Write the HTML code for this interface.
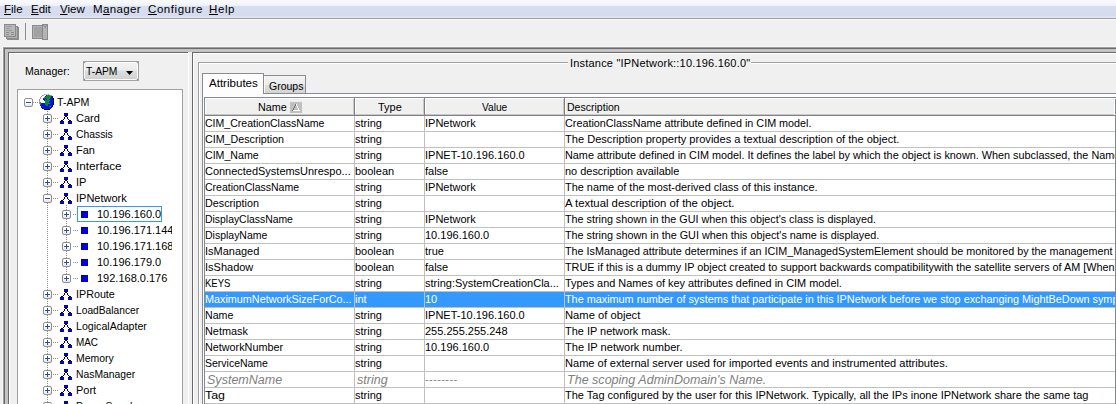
<!DOCTYPE html><html><head><meta charset="utf-8"><style>
*{margin:0;padding:0;box-sizing:border-box}
html,body{width:1116px;height:404px;overflow:hidden;background:#f0f0f0;font-family:"Liberation Sans", sans-serif;font-size:11px;color:#000;position:relative}
.a{position:absolute}
.t{position:absolute;white-space:pre;line-height:16px}
.u{text-decoration:underline}
</style></head><body>
<div class="a" style="left:0px;top:0px;width:1116px;height:18px;background:linear-gradient(#f8f9fc 0,#f6f7fb 3px,#eef1f8 5px,#eef1f8 6px,#d8deef 6px,#d6dcee 16px,#e2e6f4 17px,#e2e6f4 18px);"></div><div class="a" style="left:0px;top:18px;width:1116px;height:1px;background:#a0a0a0;"></div><div class="a" style="left:0px;top:19px;width:1116px;height:1px;background:#fafafa;"></div><div class="t" style="left:4px;top:1px;font-size:11.5px;letter-spacing:0px"><span class="u">F</span>ile</div><div class="t" style="left:31px;top:1px;font-size:11.5px;letter-spacing:0px"><span class="u">E</span>dit</div><div class="t" style="left:60px;top:1px;font-size:11.5px;letter-spacing:0px"><span class="u">V</span>iew</div><div class="t" style="left:93px;top:1px;font-size:11.5px;letter-spacing:0.38px">M<span class="u">a</span>nager</div><div class="t" style="left:148px;top:1px;font-size:11.5px;letter-spacing:0.56px"><span class="u">C</span>onfigure</div><div class="t" style="left:209px;top:1px;font-size:11.5px;letter-spacing:0.6px"><span class="u">H</span>elp</div><svg class="a" style="left:0;top:20px" width="60" height="27" viewBox="0 20 60 27" shape-rendering="crispEdges">
<rect x="7" y="27" width="12" height="13" fill="#8c8c8c"/>
<rect x="8" y="28" width="10" height="11" fill="#a6a6a6"/>
<rect x="6" y="26" width="12" height="13" fill="#8c8c8c"/>
<rect x="7" y="27" width="10" height="11" fill="#b2b2b2"/>
<rect x="4" y="24" width="12" height="13" fill="#8a8a8a"/>
<rect x="5" y="25" width="10" height="11" fill="#b8b8b8"/>
<rect x="6" y="26" width="6" height="1" fill="#9c9c9c"/>
<rect x="6" y="28" width="4" height="1" fill="#9c9c9c"/>
<rect x="6" y="30" width="6" height="1" fill="#9c9c9c"/>
<rect x="6" y="32" width="3" height="1" fill="#8c8c8c"/>
<rect x="11" y="32" width="3" height="1" fill="#8c8c8c"/>
<rect x="6" y="34" width="3" height="1" fill="#8c8c8c"/>
<rect x="11" y="34" width="3" height="1" fill="#8c8c8c"/>
<rect x="25" y="23" width="1" height="17" fill="#8e8e8e"/>
<rect x="32" y="25" width="12" height="14" fill="#8a8a8a"/>
<rect x="33" y="26" width="10" height="12" fill="#b0b0b0"/>
<rect x="34" y="27" width="8" height="10" fill="#a2a2a2"/>
<rect x="42" y="24" width="6" height="16" fill="#8a8a8a"/>
<rect x="43" y="25" width="4" height="14" fill="#b4b4b4"/>
<path d="M43 25h1v1h-1zM44 26h1v1h-1zM45 27h1v1h-1zM46 25h1v1h-1zM45 26h1v1h-1z" fill="#8a8a8a"/>
</svg><div class="a" style="left:2px;top:46px;width:1114px;height:1px;background:#f7f7f7;"></div><div class="a" style="left:2px;top:46px;width:1px;height:358px;background:#f7f7f7;"></div><div class="a" style="left:3px;top:47px;width:1113px;height:1px;background:#a0a0a0;"></div><div class="a" style="left:3px;top:47px;width:1px;height:357px;background:#a0a0a0;"></div><div class="a" style="left:4px;top:48px;width:1112px;height:1px;background:#696969;"></div><div class="a" style="left:4px;top:48px;width:1px;height:356px;background:#696969;"></div><div class="a" style="left:5px;top:49px;width:1111px;height:3px;background:#c4c4c4;"></div><div class="a" style="left:5px;top:49px;width:3px;height:355px;background:#c4c4c4;"></div><div class="a" style="left:8px;top:52px;width:180px;height:1px;background:#696969;"></div><div class="a" style="left:8px;top:52px;width:1px;height:352px;background:#696969;"></div><div class="a" style="left:9px;top:53px;width:179px;height:1px;background:#ffffff;"></div><div class="a" style="left:9px;top:53px;width:1px;height:351px;background:#ffffff;"></div><div class="a" style="left:188px;top:52px;width:1px;height:352px;background:#ffffff;"></div><div class="a" style="left:189px;top:52px;width:3px;height:352px;background:#f0f0f0;"></div><div class="a" style="left:192px;top:52px;width:924px;height:1px;background:#696969;"></div><div class="a" style="left:192px;top:52px;width:1px;height:352px;background:#696969;"></div><div class="a" style="left:193px;top:53px;width:923px;height:1px;background:#ffffff;"></div><div class="a" style="left:193px;top:53px;width:1px;height:351px;background:#ffffff;"></div><div class="t" style="left:25px;top:63px;transform:scaleX(0.96);transform-origin:0 0">Manager:</div><div class="a" style="left:83px;top:61px;width:56px;height:20px;border:1px solid #a3a3a3;background:#7a7a7a"></div><div class="a" style="left:84px;top:61px;width:54px;height:20px;border-top:1px solid #a3a3a3;border-bottom:1px solid #a3a3a3;background:transparent"></div><div class="a" style="left:83px;top:62px;width:56px;height:18px;border-left:1px solid #a3a3a3;border-right:1px solid #a3a3a3"></div><div class="a" style="left:84px;top:62px;width:54px;height:18px;border:1px solid #fbfbfb;border-radius:2px;background:linear-gradient(#f2f2f2,#ebebeb 45%,#dddddd 50%,#d2d2d2)"></div><div class="t" style="left:86px;top:63px;transform:scaleX(0.935);transform-origin:0 0">T-APM</div><svg class="a" style="left:126px;top:71px" width="8" height="5"><path d="M0 0h7l-3.5 4z" fill="#000"/></svg><div class="a" style="left:17px;top:89px;width:166px;height:315px;border:1px solid #a0a0a0;border-bottom:none;background:#fff"></div><div class="a" style="left:18px;top:90px;width:164px;height:314px;overflow:hidden"><div class="a" style="left:29px;top:21px;width:1px;height:1px;background:#8c8c8c;"></div><div class="a" style="left:29px;top:23px;width:1px;height:1px;background:#8c8c8c;"></div><div class="a" style="left:29px;top:25px;width:1px;height:1px;background:#8c8c8c;"></div><div class="a" style="left:29px;top:27px;width:1px;height:1px;background:#8c8c8c;"></div><div class="a" style="left:29px;top:29px;width:1px;height:1px;background:#8c8c8c;"></div><div class="a" style="left:29px;top:31px;width:1px;height:1px;background:#8c8c8c;"></div><div class="a" style="left:29px;top:33px;width:1px;height:1px;background:#8c8c8c;"></div><div class="a" style="left:29px;top:35px;width:1px;height:1px;background:#8c8c8c;"></div><div class="a" style="left:29px;top:37px;width:1px;height:1px;background:#8c8c8c;"></div><div class="a" style="left:29px;top:39px;width:1px;height:1px;background:#8c8c8c;"></div><div class="a" style="left:29px;top:41px;width:1px;height:1px;background:#8c8c8c;"></div><div class="a" style="left:29px;top:43px;width:1px;height:1px;background:#8c8c8c;"></div><div class="a" style="left:29px;top:45px;width:1px;height:1px;background:#8c8c8c;"></div><div class="a" style="left:29px;top:47px;width:1px;height:1px;background:#8c8c8c;"></div><div class="a" style="left:29px;top:49px;width:1px;height:1px;background:#8c8c8c;"></div><div class="a" style="left:29px;top:51px;width:1px;height:1px;background:#8c8c8c;"></div><div class="a" style="left:29px;top:53px;width:1px;height:1px;background:#8c8c8c;"></div><div class="a" style="left:29px;top:55px;width:1px;height:1px;background:#8c8c8c;"></div><div class="a" style="left:29px;top:57px;width:1px;height:1px;background:#8c8c8c;"></div><div class="a" style="left:29px;top:59px;width:1px;height:1px;background:#8c8c8c;"></div><div class="a" style="left:29px;top:61px;width:1px;height:1px;background:#8c8c8c;"></div><div class="a" style="left:29px;top:63px;width:1px;height:1px;background:#8c8c8c;"></div><div class="a" style="left:29px;top:65px;width:1px;height:1px;background:#8c8c8c;"></div><div class="a" style="left:29px;top:67px;width:1px;height:1px;background:#8c8c8c;"></div><div class="a" style="left:29px;top:69px;width:1px;height:1px;background:#8c8c8c;"></div><div class="a" style="left:29px;top:71px;width:1px;height:1px;background:#8c8c8c;"></div><div class="a" style="left:29px;top:73px;width:1px;height:1px;background:#8c8c8c;"></div><div class="a" style="left:29px;top:75px;width:1px;height:1px;background:#8c8c8c;"></div><div class="a" style="left:29px;top:77px;width:1px;height:1px;background:#8c8c8c;"></div><div class="a" style="left:29px;top:79px;width:1px;height:1px;background:#8c8c8c;"></div><div class="a" style="left:29px;top:81px;width:1px;height:1px;background:#8c8c8c;"></div><div class="a" style="left:29px;top:83px;width:1px;height:1px;background:#8c8c8c;"></div><div class="a" style="left:29px;top:85px;width:1px;height:1px;background:#8c8c8c;"></div><div class="a" style="left:29px;top:87px;width:1px;height:1px;background:#8c8c8c;"></div><div class="a" style="left:29px;top:89px;width:1px;height:1px;background:#8c8c8c;"></div><div class="a" style="left:29px;top:91px;width:1px;height:1px;background:#8c8c8c;"></div><div class="a" style="left:29px;top:93px;width:1px;height:1px;background:#8c8c8c;"></div><div class="a" style="left:29px;top:95px;width:1px;height:1px;background:#8c8c8c;"></div><div class="a" style="left:29px;top:97px;width:1px;height:1px;background:#8c8c8c;"></div><div class="a" style="left:29px;top:99px;width:1px;height:1px;background:#8c8c8c;"></div><div class="a" style="left:29px;top:101px;width:1px;height:1px;background:#8c8c8c;"></div><div class="a" style="left:29px;top:103px;width:1px;height:1px;background:#8c8c8c;"></div><div class="a" style="left:29px;top:105px;width:1px;height:1px;background:#8c8c8c;"></div><div class="a" style="left:29px;top:107px;width:1px;height:1px;background:#8c8c8c;"></div><div class="a" style="left:29px;top:109px;width:1px;height:1px;background:#8c8c8c;"></div><div class="a" style="left:29px;top:111px;width:1px;height:1px;background:#8c8c8c;"></div><div class="a" style="left:29px;top:113px;width:1px;height:1px;background:#8c8c8c;"></div><div class="a" style="left:29px;top:115px;width:1px;height:1px;background:#8c8c8c;"></div><div class="a" style="left:29px;top:117px;width:1px;height:1px;background:#8c8c8c;"></div><div class="a" style="left:29px;top:119px;width:1px;height:1px;background:#8c8c8c;"></div><div class="a" style="left:29px;top:121px;width:1px;height:1px;background:#8c8c8c;"></div><div class="a" style="left:29px;top:123px;width:1px;height:1px;background:#8c8c8c;"></div><div class="a" style="left:29px;top:125px;width:1px;height:1px;background:#8c8c8c;"></div><div class="a" style="left:29px;top:127px;width:1px;height:1px;background:#8c8c8c;"></div><div class="a" style="left:29px;top:129px;width:1px;height:1px;background:#8c8c8c;"></div><div class="a" style="left:29px;top:131px;width:1px;height:1px;background:#8c8c8c;"></div><div class="a" style="left:29px;top:133px;width:1px;height:1px;background:#8c8c8c;"></div><div class="a" style="left:29px;top:135px;width:1px;height:1px;background:#8c8c8c;"></div><div class="a" style="left:29px;top:137px;width:1px;height:1px;background:#8c8c8c;"></div><div class="a" style="left:29px;top:139px;width:1px;height:1px;background:#8c8c8c;"></div><div class="a" style="left:29px;top:141px;width:1px;height:1px;background:#8c8c8c;"></div><div class="a" style="left:29px;top:143px;width:1px;height:1px;background:#8c8c8c;"></div><div class="a" style="left:29px;top:145px;width:1px;height:1px;background:#8c8c8c;"></div><div class="a" style="left:29px;top:147px;width:1px;height:1px;background:#8c8c8c;"></div><div class="a" style="left:29px;top:149px;width:1px;height:1px;background:#8c8c8c;"></div><div class="a" style="left:29px;top:151px;width:1px;height:1px;background:#8c8c8c;"></div><div class="a" style="left:29px;top:153px;width:1px;height:1px;background:#8c8c8c;"></div><div class="a" style="left:29px;top:155px;width:1px;height:1px;background:#8c8c8c;"></div><div class="a" style="left:29px;top:157px;width:1px;height:1px;background:#8c8c8c;"></div><div class="a" style="left:29px;top:159px;width:1px;height:1px;background:#8c8c8c;"></div><div class="a" style="left:29px;top:161px;width:1px;height:1px;background:#8c8c8c;"></div><div class="a" style="left:29px;top:163px;width:1px;height:1px;background:#8c8c8c;"></div><div class="a" style="left:29px;top:165px;width:1px;height:1px;background:#8c8c8c;"></div><div class="a" style="left:29px;top:167px;width:1px;height:1px;background:#8c8c8c;"></div><div class="a" style="left:29px;top:169px;width:1px;height:1px;background:#8c8c8c;"></div><div class="a" style="left:29px;top:171px;width:1px;height:1px;background:#8c8c8c;"></div><div class="a" style="left:29px;top:173px;width:1px;height:1px;background:#8c8c8c;"></div><div class="a" style="left:29px;top:175px;width:1px;height:1px;background:#8c8c8c;"></div><div class="a" style="left:29px;top:177px;width:1px;height:1px;background:#8c8c8c;"></div><div class="a" style="left:29px;top:179px;width:1px;height:1px;background:#8c8c8c;"></div><div class="a" style="left:29px;top:181px;width:1px;height:1px;background:#8c8c8c;"></div><div class="a" style="left:29px;top:183px;width:1px;height:1px;background:#8c8c8c;"></div><div class="a" style="left:29px;top:185px;width:1px;height:1px;background:#8c8c8c;"></div><div class="a" style="left:29px;top:187px;width:1px;height:1px;background:#8c8c8c;"></div><div class="a" style="left:29px;top:189px;width:1px;height:1px;background:#8c8c8c;"></div><div class="a" style="left:29px;top:191px;width:1px;height:1px;background:#8c8c8c;"></div><div class="a" style="left:29px;top:193px;width:1px;height:1px;background:#8c8c8c;"></div><div class="a" style="left:29px;top:195px;width:1px;height:1px;background:#8c8c8c;"></div><div class="a" style="left:29px;top:197px;width:1px;height:1px;background:#8c8c8c;"></div><div class="a" style="left:29px;top:199px;width:1px;height:1px;background:#8c8c8c;"></div><div class="a" style="left:29px;top:201px;width:1px;height:1px;background:#8c8c8c;"></div><div class="a" style="left:29px;top:203px;width:1px;height:1px;background:#8c8c8c;"></div><div class="a" style="left:29px;top:205px;width:1px;height:1px;background:#8c8c8c;"></div><div class="a" style="left:29px;top:207px;width:1px;height:1px;background:#8c8c8c;"></div><div class="a" style="left:29px;top:209px;width:1px;height:1px;background:#8c8c8c;"></div><div class="a" style="left:29px;top:211px;width:1px;height:1px;background:#8c8c8c;"></div><div class="a" style="left:29px;top:213px;width:1px;height:1px;background:#8c8c8c;"></div><div class="a" style="left:29px;top:215px;width:1px;height:1px;background:#8c8c8c;"></div><div class="a" style="left:29px;top:217px;width:1px;height:1px;background:#8c8c8c;"></div><div class="a" style="left:29px;top:219px;width:1px;height:1px;background:#8c8c8c;"></div><div class="a" style="left:29px;top:221px;width:1px;height:1px;background:#8c8c8c;"></div><div class="a" style="left:29px;top:223px;width:1px;height:1px;background:#8c8c8c;"></div><div class="a" style="left:29px;top:225px;width:1px;height:1px;background:#8c8c8c;"></div><div class="a" style="left:29px;top:227px;width:1px;height:1px;background:#8c8c8c;"></div><div class="a" style="left:29px;top:229px;width:1px;height:1px;background:#8c8c8c;"></div><div class="a" style="left:29px;top:231px;width:1px;height:1px;background:#8c8c8c;"></div><div class="a" style="left:29px;top:233px;width:1px;height:1px;background:#8c8c8c;"></div><div class="a" style="left:29px;top:235px;width:1px;height:1px;background:#8c8c8c;"></div><div class="a" style="left:29px;top:237px;width:1px;height:1px;background:#8c8c8c;"></div><div class="a" style="left:29px;top:239px;width:1px;height:1px;background:#8c8c8c;"></div><div class="a" style="left:29px;top:241px;width:1px;height:1px;background:#8c8c8c;"></div><div class="a" style="left:29px;top:243px;width:1px;height:1px;background:#8c8c8c;"></div><div class="a" style="left:29px;top:245px;width:1px;height:1px;background:#8c8c8c;"></div><div class="a" style="left:29px;top:247px;width:1px;height:1px;background:#8c8c8c;"></div><div class="a" style="left:29px;top:249px;width:1px;height:1px;background:#8c8c8c;"></div><div class="a" style="left:29px;top:251px;width:1px;height:1px;background:#8c8c8c;"></div><div class="a" style="left:29px;top:253px;width:1px;height:1px;background:#8c8c8c;"></div><div class="a" style="left:29px;top:255px;width:1px;height:1px;background:#8c8c8c;"></div><div class="a" style="left:29px;top:257px;width:1px;height:1px;background:#8c8c8c;"></div><div class="a" style="left:29px;top:259px;width:1px;height:1px;background:#8c8c8c;"></div><div class="a" style="left:29px;top:261px;width:1px;height:1px;background:#8c8c8c;"></div><div class="a" style="left:29px;top:263px;width:1px;height:1px;background:#8c8c8c;"></div><div class="a" style="left:29px;top:265px;width:1px;height:1px;background:#8c8c8c;"></div><div class="a" style="left:29px;top:267px;width:1px;height:1px;background:#8c8c8c;"></div><div class="a" style="left:29px;top:269px;width:1px;height:1px;background:#8c8c8c;"></div><div class="a" style="left:29px;top:271px;width:1px;height:1px;background:#8c8c8c;"></div><div class="a" style="left:29px;top:273px;width:1px;height:1px;background:#8c8c8c;"></div><div class="a" style="left:29px;top:275px;width:1px;height:1px;background:#8c8c8c;"></div><div class="a" style="left:29px;top:277px;width:1px;height:1px;background:#8c8c8c;"></div><div class="a" style="left:29px;top:279px;width:1px;height:1px;background:#8c8c8c;"></div><div class="a" style="left:29px;top:281px;width:1px;height:1px;background:#8c8c8c;"></div><div class="a" style="left:29px;top:283px;width:1px;height:1px;background:#8c8c8c;"></div><div class="a" style="left:29px;top:285px;width:1px;height:1px;background:#8c8c8c;"></div><div class="a" style="left:29px;top:287px;width:1px;height:1px;background:#8c8c8c;"></div><div class="a" style="left:29px;top:289px;width:1px;height:1px;background:#8c8c8c;"></div><div class="a" style="left:29px;top:291px;width:1px;height:1px;background:#8c8c8c;"></div><div class="a" style="left:29px;top:293px;width:1px;height:1px;background:#8c8c8c;"></div><div class="a" style="left:29px;top:295px;width:1px;height:1px;background:#8c8c8c;"></div><div class="a" style="left:29px;top:297px;width:1px;height:1px;background:#8c8c8c;"></div><div class="a" style="left:29px;top:299px;width:1px;height:1px;background:#8c8c8c;"></div><div class="a" style="left:29px;top:301px;width:1px;height:1px;background:#8c8c8c;"></div><div class="a" style="left:29px;top:303px;width:1px;height:1px;background:#8c8c8c;"></div><div class="a" style="left:29px;top:305px;width:1px;height:1px;background:#8c8c8c;"></div><div class="a" style="left:29px;top:307px;width:1px;height:1px;background:#8c8c8c;"></div><div class="a" style="left:29px;top:309px;width:1px;height:1px;background:#8c8c8c;"></div><div class="a" style="left:29px;top:311px;width:1px;height:1px;background:#8c8c8c;"></div><div class="a" style="left:29px;top:313px;width:1px;height:1px;background:#8c8c8c;"></div><div class="a" style="left:48px;top:115px;width:1px;height:1px;background:#8c8c8c;"></div><div class="a" style="left:48px;top:117px;width:1px;height:1px;background:#8c8c8c;"></div><div class="a" style="left:48px;top:119px;width:1px;height:1px;background:#8c8c8c;"></div><div class="a" style="left:48px;top:121px;width:1px;height:1px;background:#8c8c8c;"></div><div class="a" style="left:48px;top:123px;width:1px;height:1px;background:#8c8c8c;"></div><div class="a" style="left:48px;top:125px;width:1px;height:1px;background:#8c8c8c;"></div><div class="a" style="left:48px;top:127px;width:1px;height:1px;background:#8c8c8c;"></div><div class="a" style="left:48px;top:129px;width:1px;height:1px;background:#8c8c8c;"></div><div class="a" style="left:48px;top:131px;width:1px;height:1px;background:#8c8c8c;"></div><div class="a" style="left:48px;top:133px;width:1px;height:1px;background:#8c8c8c;"></div><div class="a" style="left:48px;top:135px;width:1px;height:1px;background:#8c8c8c;"></div><div class="a" style="left:48px;top:137px;width:1px;height:1px;background:#8c8c8c;"></div><div class="a" style="left:48px;top:139px;width:1px;height:1px;background:#8c8c8c;"></div><div class="a" style="left:48px;top:141px;width:1px;height:1px;background:#8c8c8c;"></div><div class="a" style="left:48px;top:143px;width:1px;height:1px;background:#8c8c8c;"></div><div class="a" style="left:48px;top:145px;width:1px;height:1px;background:#8c8c8c;"></div><div class="a" style="left:48px;top:147px;width:1px;height:1px;background:#8c8c8c;"></div><div class="a" style="left:48px;top:149px;width:1px;height:1px;background:#8c8c8c;"></div><div class="a" style="left:48px;top:151px;width:1px;height:1px;background:#8c8c8c;"></div><div class="a" style="left:48px;top:153px;width:1px;height:1px;background:#8c8c8c;"></div><div class="a" style="left:48px;top:155px;width:1px;height:1px;background:#8c8c8c;"></div><div class="a" style="left:48px;top:157px;width:1px;height:1px;background:#8c8c8c;"></div><div class="a" style="left:48px;top:159px;width:1px;height:1px;background:#8c8c8c;"></div><div class="a" style="left:48px;top:161px;width:1px;height:1px;background:#8c8c8c;"></div><div class="a" style="left:48px;top:163px;width:1px;height:1px;background:#8c8c8c;"></div><div class="a" style="left:48px;top:165px;width:1px;height:1px;background:#8c8c8c;"></div><div class="a" style="left:48px;top:167px;width:1px;height:1px;background:#8c8c8c;"></div><div class="a" style="left:48px;top:169px;width:1px;height:1px;background:#8c8c8c;"></div><div class="a" style="left:48px;top:171px;width:1px;height:1px;background:#8c8c8c;"></div><div class="a" style="left:48px;top:173px;width:1px;height:1px;background:#8c8c8c;"></div><div class="a" style="left:48px;top:175px;width:1px;height:1px;background:#8c8c8c;"></div><div class="a" style="left:48px;top:177px;width:1px;height:1px;background:#8c8c8c;"></div><div class="a" style="left:48px;top:179px;width:1px;height:1px;background:#8c8c8c;"></div><div class="a" style="left:48px;top:181px;width:1px;height:1px;background:#8c8c8c;"></div><div class="a" style="left:48px;top:183px;width:1px;height:1px;background:#8c8c8c;"></div><div class="a" style="left:48px;top:185px;width:1px;height:1px;background:#8c8c8c;"></div><div class="a" style="left:48px;top:187px;width:1px;height:1px;background:#8c8c8c;"></div><div class="a" style="left:6px;top:8px;width:9px;height:9px;border:1px solid #8f8f8f;border-radius:2px;background:linear-gradient(#ffffff 45%,#e6e6e6)"></div><div class="a" style="left:8px;top:12px;width:5px;height:1px;background:#2d4f94;"></div><div class="a" style="left:15px;top:12px;width:1px;height:1px;background:#8c8c8c;"></div><div class="a" style="left:17px;top:12px;width:1px;height:1px;background:#8c8c8c;"></div><div class="a" style="left:19px;top:12px;width:1px;height:1px;background:#8c8c8c;"></div><svg class="a" style="left:21px;top:4px" width="15" height="16" shape-rendering="crispEdges"><rect x="5" y="0" width="1" height="1" fill="#9c9c9c"/><rect x="6" y="0" width="1" height="1" fill="#c8c8c8"/><rect x="7" y="0" width="1" height="1" fill="#c8c8c8"/><rect x="8" y="0" width="1" height="1" fill="#c8c8c8"/><rect x="9" y="0" width="1" height="1" fill="#9c9c9c"/><rect x="3" y="1" width="1" height="1" fill="#9c9c9c"/><rect x="4" y="1" width="1" height="1" fill="#9c9c9c"/><rect x="5" y="1" width="1" height="1" fill="#f4f4f4"/><rect x="6" y="1" width="1" height="1" fill="#f4f4f4"/><rect x="7" y="1" width="1" height="1" fill="#0a10f0"/><rect x="8" y="1" width="1" height="1" fill="#2a8a8a"/><rect x="9" y="1" width="1" height="1" fill="#0a8a1a"/><rect x="10" y="1" width="1" height="1" fill="#0a8a1a"/><rect x="11" y="1" width="1" height="1" fill="#9c9c9c"/><rect x="12" y="1" width="1" height="1" fill="#9c9c9c"/><rect x="2" y="2" width="1" height="1" fill="#9c9c9c"/><rect x="3" y="2" width="1" height="1" fill="#f4f4f4"/><rect x="4" y="2" width="1" height="1" fill="#f4f4f4"/><rect x="5" y="2" width="1" height="1" fill="#f4f4f4"/><rect x="6" y="2" width="1" height="1" fill="#0a10f0"/><rect x="7" y="2" width="1" height="1" fill="#0a8a1a"/><rect x="8" y="2" width="1" height="1" fill="#0a8a1a"/><rect x="9" y="2" width="1" height="1" fill="#0a8a1a"/><rect x="10" y="2" width="1" height="1" fill="#0a8a1a"/><rect x="11" y="2" width="1" height="1" fill="#0a8a1a"/><rect x="12" y="2" width="1" height="1" fill="#0a10f0"/><rect x="13" y="2" width="1" height="1" fill="#0a10f0"/><rect x="1" y="3" width="1" height="1" fill="#9c9c9c"/><rect x="2" y="3" width="1" height="1" fill="#f4f4f4"/><rect x="3" y="3" width="1" height="1" fill="#f4f4f4"/><rect x="4" y="3" width="1" height="1" fill="#f4f4f4"/><rect x="5" y="3" width="1" height="1" fill="#2a8a8a"/><rect x="6" y="3" width="1" height="1" fill="#0a8a1a"/><rect x="7" y="3" width="1" height="1" fill="#0a8a1a"/><rect x="8" y="3" width="1" height="1" fill="#0a8a1a"/><rect x="9" y="3" width="1" height="1" fill="#0a8a1a"/><rect x="10" y="3" width="1" height="1" fill="#0a8a1a"/><rect x="11" y="3" width="1" height="1" fill="#0a8a1a"/><rect x="12" y="3" width="1" height="1" fill="#0a10f0"/><rect x="13" y="3" width="1" height="1" fill="#101020"/><rect x="1" y="4" width="1" height="1" fill="#9c9c9c"/><rect x="2" y="4" width="1" height="1" fill="#f4f4f4"/><rect x="3" y="4" width="1" height="1" fill="#f4f4f4"/><rect x="4" y="4" width="1" height="1" fill="#0a10f0"/><rect x="5" y="4" width="1" height="1" fill="#0a8a1a"/><rect x="6" y="4" width="1" height="1" fill="#0a10f0"/><rect x="7" y="4" width="1" height="1" fill="#0a8a1a"/><rect x="8" y="4" width="1" height="1" fill="#0a8a1a"/><rect x="9" y="4" width="1" height="1" fill="#0a8a1a"/><rect x="10" y="4" width="1" height="1" fill="#2a8a8a"/><rect x="11" y="4" width="1" height="1" fill="#0a10f0"/><rect x="12" y="4" width="1" height="1" fill="#0a10f0"/><rect x="13" y="4" width="1" height="1" fill="#0a10f0"/><rect x="14" y="4" width="1" height="1" fill="#101020"/><rect x="0" y="5" width="1" height="1" fill="#9c9c9c"/><rect x="1" y="5" width="1" height="1" fill="#f4f4f4"/><rect x="2" y="5" width="1" height="1" fill="#f4f4f4"/><rect x="3" y="5" width="1" height="1" fill="#f4f4f4"/><rect x="4" y="5" width="1" height="1" fill="#0a10f0"/><rect x="5" y="5" width="1" height="1" fill="#0a10f0"/><rect x="6" y="5" width="1" height="1" fill="#0a8a1a"/><rect x="7" y="5" width="1" height="1" fill="#0a10f0"/><rect x="8" y="5" width="1" height="1" fill="#0a8a1a"/><rect x="9" y="5" width="1" height="1" fill="#0a8a1a"/><rect x="10" y="5" width="1" height="1" fill="#0a10f0"/><rect x="11" y="5" width="1" height="1" fill="#0a10f0"/><rect x="12" y="5" width="1" height="1" fill="#0a10f0"/><rect x="13" y="5" width="1" height="1" fill="#0a10f0"/><rect x="14" y="5" width="1" height="1" fill="#101020"/><rect x="0" y="6" width="1" height="1" fill="#9c9c9c"/><rect x="1" y="6" width="1" height="1" fill="#f4f4f4"/><rect x="2" y="6" width="1" height="1" fill="#f4f4f4"/><rect x="3" y="6" width="1" height="1" fill="#f4f4f4"/><rect x="4" y="6" width="1" height="1" fill="#f4f4f4"/><rect x="5" y="6" width="1" height="1" fill="#0a10f0"/><rect x="6" y="6" width="1" height="1" fill="#0a8a1a"/><rect x="7" y="6" width="1" height="1" fill="#0a8a1a"/><rect x="8" y="6" width="1" height="1" fill="#0a8a1a"/><rect x="9" y="6" width="1" height="1" fill="#0a8a1a"/><rect x="10" y="6" width="1" height="1" fill="#2a8a8a"/><rect x="11" y="6" width="1" height="1" fill="#0a10f0"/><rect x="12" y="6" width="1" height="1" fill="#0a10f0"/><rect x="13" y="6" width="1" height="1" fill="#0a10f0"/><rect x="14" y="6" width="1" height="1" fill="#101020"/><rect x="0" y="7" width="1" height="1" fill="#9c9c9c"/><rect x="1" y="7" width="1" height="1" fill="#f4f4f4"/><rect x="2" y="7" width="1" height="1" fill="#f4f4f4"/><rect x="3" y="7" width="1" height="1" fill="#f4f4f4"/><rect x="4" y="7" width="1" height="1" fill="#f4f4f4"/><rect x="5" y="7" width="1" height="1" fill="#f4f4f4"/><rect x="6" y="7" width="1" height="1" fill="#0a8a1a"/><rect x="7" y="7" width="1" height="1" fill="#0a8a1a"/><rect x="8" y="7" width="1" height="1" fill="#0a8a1a"/><rect x="9" y="7" width="1" height="1" fill="#2a8a8a"/><rect x="10" y="7" width="1" height="1" fill="#0a10f0"/><rect x="11" y="7" width="1" height="1" fill="#0a10f0"/><rect x="12" y="7" width="1" height="1" fill="#0a10f0"/><rect x="13" y="7" width="1" height="1" fill="#0a10f0"/><rect x="14" y="7" width="1" height="1" fill="#101020"/><rect x="0" y="8" width="1" height="1" fill="#9c9c9c"/><rect x="1" y="8" width="1" height="1" fill="#2a8a8a"/><rect x="2" y="8" width="1" height="1" fill="#f4f4f4"/><rect x="3" y="8" width="1" height="1" fill="#f4f4f4"/><rect x="4" y="8" width="1" height="1" fill="#f4f4f4"/><rect x="5" y="8" width="1" height="1" fill="#f4f4f4"/><rect x="6" y="8" width="1" height="1" fill="#0a8a1a"/><rect x="7" y="8" width="1" height="1" fill="#0a8a1a"/><rect x="8" y="8" width="1" height="1" fill="#0a8a1a"/><rect x="9" y="8" width="1" height="1" fill="#0a8a1a"/><rect x="10" y="8" width="1" height="1" fill="#0a10f0"/><rect x="11" y="8" width="1" height="1" fill="#0a10f0"/><rect x="12" y="8" width="1" height="1" fill="#0a10f0"/><rect x="13" y="8" width="1" height="1" fill="#0a10f0"/><rect x="14" y="8" width="1" height="1" fill="#101020"/><rect x="0" y="9" width="1" height="1" fill="#9c9c9c"/><rect x="1" y="9" width="1" height="1" fill="#2a8a8a"/><rect x="2" y="9" width="1" height="1" fill="#0a10f0"/><rect x="3" y="9" width="1" height="1" fill="#0a10f0"/><rect x="4" y="9" width="1" height="1" fill="#0a10f0"/><rect x="5" y="9" width="1" height="1" fill="#0a10f0"/><rect x="6" y="9" width="1" height="1" fill="#0a8a1a"/><rect x="7" y="9" width="1" height="1" fill="#0a8a1a"/><rect x="8" y="9" width="1" height="1" fill="#0a8a1a"/><rect x="9" y="9" width="1" height="1" fill="#0a8a1a"/><rect x="10" y="9" width="1" height="1" fill="#2a8a8a"/><rect x="11" y="9" width="1" height="1" fill="#0a10f0"/><rect x="12" y="9" width="1" height="1" fill="#0a10f0"/><rect x="13" y="9" width="1" height="1" fill="#0a10f0"/><rect x="14" y="9" width="1" height="1" fill="#101020"/><rect x="1" y="10" width="1" height="1" fill="#0a8a1a"/><rect x="2" y="10" width="1" height="1" fill="#0a10f0"/><rect x="3" y="10" width="1" height="1" fill="#0a10f0"/><rect x="4" y="10" width="1" height="1" fill="#0a10f0"/><rect x="5" y="10" width="1" height="1" fill="#0a10f0"/><rect x="6" y="10" width="1" height="1" fill="#0a8a1a"/><rect x="7" y="10" width="1" height="1" fill="#0a8a1a"/><rect x="8" y="10" width="1" height="1" fill="#0a8a1a"/><rect x="9" y="10" width="1" height="1" fill="#0a10f0"/><rect x="10" y="10" width="1" height="1" fill="#0a10f0"/><rect x="11" y="10" width="1" height="1" fill="#0a10f0"/><rect x="12" y="10" width="1" height="1" fill="#0a10f0"/><rect x="13" y="10" width="1" height="1" fill="#0a10f0"/><rect x="14" y="10" width="1" height="1" fill="#101020"/><rect x="1" y="11" width="1" height="1" fill="#0a10f0"/><rect x="2" y="11" width="1" height="1" fill="#0a10f0"/><rect x="3" y="11" width="1" height="1" fill="#0a10f0"/><rect x="4" y="11" width="1" height="1" fill="#0a10f0"/><rect x="5" y="11" width="1" height="1" fill="#0a10f0"/><rect x="6" y="11" width="1" height="1" fill="#0a10f0"/><rect x="7" y="11" width="1" height="1" fill="#0a8a1a"/><rect x="8" y="11" width="1" height="1" fill="#0a8a1a"/><rect x="9" y="11" width="1" height="1" fill="#0a10f0"/><rect x="10" y="11" width="1" height="1" fill="#0a10f0"/><rect x="11" y="11" width="1" height="1" fill="#0a10f0"/><rect x="12" y="11" width="1" height="1" fill="#0a10f0"/><rect x="13" y="11" width="1" height="1" fill="#101020"/><rect x="2" y="12" width="1" height="1" fill="#0a10f0"/><rect x="3" y="12" width="1" height="1" fill="#0a10f0"/><rect x="4" y="12" width="1" height="1" fill="#0a10f0"/><rect x="5" y="12" width="1" height="1" fill="#0a10f0"/><rect x="6" y="12" width="1" height="1" fill="#0a10f0"/><rect x="7" y="12" width="1" height="1" fill="#0a10f0"/><rect x="8" y="12" width="1" height="1" fill="#0a10f0"/><rect x="9" y="12" width="1" height="1" fill="#0a10f0"/><rect x="10" y="12" width="1" height="1" fill="#0a8a1a"/><rect x="11" y="12" width="1" height="1" fill="#2a8a8a"/><rect x="12" y="12" width="1" height="1" fill="#0a10f0"/><rect x="13" y="12" width="1" height="1" fill="#101020"/><rect x="2" y="13" width="1" height="1" fill="#0a10f0"/><rect x="3" y="13" width="1" height="1" fill="#0a10f0"/><rect x="4" y="13" width="1" height="1" fill="#0a10f0"/><rect x="5" y="13" width="1" height="1" fill="#0a10f0"/><rect x="6" y="13" width="1" height="1" fill="#0a10f0"/><rect x="7" y="13" width="1" height="1" fill="#0a10f0"/><rect x="8" y="13" width="1" height="1" fill="#0a10f0"/><rect x="9" y="13" width="1" height="1" fill="#0a10f0"/><rect x="10" y="13" width="1" height="1" fill="#0a10f0"/><rect x="11" y="13" width="1" height="1" fill="#0a10f0"/><rect x="12" y="13" width="1" height="1" fill="#101020"/><rect x="3" y="14" width="1" height="1" fill="#101020"/><rect x="4" y="14" width="1" height="1" fill="#0a10f0"/><rect x="5" y="14" width="1" height="1" fill="#0a10f0"/><rect x="6" y="14" width="1" height="1" fill="#0a10f0"/><rect x="7" y="14" width="1" height="1" fill="#0a10f0"/><rect x="8" y="14" width="1" height="1" fill="#0a10f0"/><rect x="9" y="14" width="1" height="1" fill="#0a10f0"/><rect x="10" y="14" width="1" height="1" fill="#0a10f0"/><rect x="11" y="14" width="1" height="1" fill="#101020"/><rect x="5" y="15" width="1" height="1" fill="#101020"/><rect x="6" y="15" width="1" height="1" fill="#101020"/><rect x="7" y="15" width="1" height="1" fill="#101020"/><rect x="8" y="15" width="1" height="1" fill="#101020"/><rect x="9" y="15" width="1" height="1" fill="#101020"/><rect x="10" y="15" width="1" height="1" fill="#101020"/></svg><div class="t" style="left:39px;top:4px;transform:scaleX(0.966);transform-origin:0 0">T-APM</div><div class="a" style="left:25px;top:24px;width:9px;height:9px;border:1px solid #8f8f8f;border-radius:2px;background:linear-gradient(#ffffff 45%,#e6e6e6)"></div><div class="a" style="left:27px;top:28px;width:5px;height:1px;background:#2d4f94;"></div><div class="a" style="left:29px;top:26px;width:1px;height:5px;background:#2d4f94;"></div><div class="a" style="left:35px;top:28px;width:1px;height:1px;background:#8c8c8c;"></div><div class="a" style="left:37px;top:28px;width:1px;height:1px;background:#8c8c8c;"></div><div class="a" style="left:39px;top:28px;width:1px;height:1px;background:#8c8c8c;"></div><svg class="a" style="left:42px;top:23px" width="12" height="11"><rect x="4" y="0" width="4" height="3" fill="#0000d4"/><rect x="0" y="8" width="4" height="3" fill="#0000d4"/><rect x="8" y="8" width="4" height="3" fill="#0000d4"/><path d="M5 3h2v1H5zM4 4h1v2H4zM3 6h1v1H3zM1 7h2v1H1zM7 4h1v2H7zM8 6h1v1H8zM9 7h2v1H9z" fill="#000"/></svg><div class="t" style="left:58px;top:20px;transform:scaleX(1.0);transform-origin:0 0">Card</div><div class="a" style="left:25px;top:40px;width:9px;height:9px;border:1px solid #8f8f8f;border-radius:2px;background:linear-gradient(#ffffff 45%,#e6e6e6)"></div><div class="a" style="left:27px;top:44px;width:5px;height:1px;background:#2d4f94;"></div><div class="a" style="left:29px;top:42px;width:1px;height:5px;background:#2d4f94;"></div><div class="a" style="left:35px;top:44px;width:1px;height:1px;background:#8c8c8c;"></div><div class="a" style="left:37px;top:44px;width:1px;height:1px;background:#8c8c8c;"></div><div class="a" style="left:39px;top:44px;width:1px;height:1px;background:#8c8c8c;"></div><svg class="a" style="left:42px;top:39px" width="12" height="11"><rect x="4" y="0" width="4" height="3" fill="#0000d4"/><rect x="0" y="8" width="4" height="3" fill="#0000d4"/><rect x="8" y="8" width="4" height="3" fill="#0000d4"/><path d="M5 3h2v1H5zM4 4h1v2H4zM3 6h1v1H3zM1 7h2v1H1zM7 4h1v2H7zM8 6h1v1H8zM9 7h2v1H9z" fill="#000"/></svg><div class="t" style="left:58px;top:36px;transform:scaleX(0.94);transform-origin:0 0">Chassis</div><div class="a" style="left:25px;top:56px;width:9px;height:9px;border:1px solid #8f8f8f;border-radius:2px;background:linear-gradient(#ffffff 45%,#e6e6e6)"></div><div class="a" style="left:27px;top:60px;width:5px;height:1px;background:#2d4f94;"></div><div class="a" style="left:29px;top:58px;width:1px;height:5px;background:#2d4f94;"></div><div class="a" style="left:35px;top:60px;width:1px;height:1px;background:#8c8c8c;"></div><div class="a" style="left:37px;top:60px;width:1px;height:1px;background:#8c8c8c;"></div><div class="a" style="left:39px;top:60px;width:1px;height:1px;background:#8c8c8c;"></div><svg class="a" style="left:42px;top:55px" width="12" height="11"><rect x="4" y="0" width="4" height="3" fill="#0000d4"/><rect x="0" y="8" width="4" height="3" fill="#0000d4"/><rect x="8" y="8" width="4" height="3" fill="#0000d4"/><path d="M5 3h2v1H5zM4 4h1v2H4zM3 6h1v1H3zM1 7h2v1H1zM7 4h1v2H7zM8 6h1v1H8zM9 7h2v1H9z" fill="#000"/></svg><div class="t" style="left:58px;top:52px;transform:scaleX(1.0);transform-origin:0 0">Fan</div><div class="a" style="left:25px;top:72px;width:9px;height:9px;border:1px solid #8f8f8f;border-radius:2px;background:linear-gradient(#ffffff 45%,#e6e6e6)"></div><div class="a" style="left:27px;top:76px;width:5px;height:1px;background:#2d4f94;"></div><div class="a" style="left:29px;top:74px;width:1px;height:5px;background:#2d4f94;"></div><div class="a" style="left:35px;top:76px;width:1px;height:1px;background:#8c8c8c;"></div><div class="a" style="left:37px;top:76px;width:1px;height:1px;background:#8c8c8c;"></div><div class="a" style="left:39px;top:76px;width:1px;height:1px;background:#8c8c8c;"></div><svg class="a" style="left:42px;top:71px" width="12" height="11"><rect x="4" y="0" width="4" height="3" fill="#0000d4"/><rect x="0" y="8" width="4" height="3" fill="#0000d4"/><rect x="8" y="8" width="4" height="3" fill="#0000d4"/><path d="M5 3h2v1H5zM4 4h1v2H4zM3 6h1v1H3zM1 7h2v1H1zM7 4h1v2H7zM8 6h1v1H8zM9 7h2v1H9z" fill="#000"/></svg><div class="t" style="left:58px;top:68px;transform:scaleX(1.065);transform-origin:0 0">Interface</div><div class="a" style="left:25px;top:88px;width:9px;height:9px;border:1px solid #8f8f8f;border-radius:2px;background:linear-gradient(#ffffff 45%,#e6e6e6)"></div><div class="a" style="left:27px;top:92px;width:5px;height:1px;background:#2d4f94;"></div><div class="a" style="left:29px;top:90px;width:1px;height:5px;background:#2d4f94;"></div><div class="a" style="left:35px;top:92px;width:1px;height:1px;background:#8c8c8c;"></div><div class="a" style="left:37px;top:92px;width:1px;height:1px;background:#8c8c8c;"></div><div class="a" style="left:39px;top:92px;width:1px;height:1px;background:#8c8c8c;"></div><svg class="a" style="left:42px;top:87px" width="12" height="11"><rect x="4" y="0" width="4" height="3" fill="#0000d4"/><rect x="0" y="8" width="4" height="3" fill="#0000d4"/><rect x="8" y="8" width="4" height="3" fill="#0000d4"/><path d="M5 3h2v1H5zM4 4h1v2H4zM3 6h1v1H3zM1 7h2v1H1zM7 4h1v2H7zM8 6h1v1H8zM9 7h2v1H9z" fill="#000"/></svg><div class="t" style="left:58px;top:84px;transform:scaleX(1.0);transform-origin:0 0">IP</div><div class="a" style="left:25px;top:104px;width:9px;height:9px;border:1px solid #8f8f8f;border-radius:2px;background:linear-gradient(#ffffff 45%,#e6e6e6)"></div><div class="a" style="left:27px;top:108px;width:5px;height:1px;background:#2d4f94;"></div><div class="a" style="left:35px;top:108px;width:1px;height:1px;background:#8c8c8c;"></div><div class="a" style="left:37px;top:108px;width:1px;height:1px;background:#8c8c8c;"></div><div class="a" style="left:39px;top:108px;width:1px;height:1px;background:#8c8c8c;"></div><svg class="a" style="left:42px;top:103px" width="12" height="11"><rect x="4" y="0" width="4" height="3" fill="#0000d4"/><rect x="0" y="8" width="4" height="3" fill="#0000d4"/><rect x="8" y="8" width="4" height="3" fill="#0000d4"/><path d="M5 3h2v1H5zM4 4h1v2H4zM3 6h1v1H3zM1 7h2v1H1zM7 4h1v2H7zM8 6h1v1H8zM9 7h2v1H9z" fill="#000"/></svg><div class="t" style="left:58px;top:100px;transform:scaleX(1.0);transform-origin:0 0">IPNetwork</div><div class="a" style="left:44px;top:120px;width:9px;height:9px;border:1px solid #8f8f8f;border-radius:2px;background:linear-gradient(#ffffff 45%,#e6e6e6)"></div><div class="a" style="left:46px;top:124px;width:5px;height:1px;background:#2d4f94;"></div><div class="a" style="left:48px;top:122px;width:1px;height:5px;background:#2d4f94;"></div><div class="a" style="left:55px;top:124px;width:1px;height:1px;background:#8c8c8c;"></div><div class="a" style="left:57px;top:124px;width:1px;height:1px;background:#8c8c8c;"></div><div class="a" style="left:59px;top:124px;width:1px;height:1px;background:#8c8c8c;"></div><div class="a" style="left:63px;top:121px;width:7px;height:7px;background:#0000d4;"></div><div class="a" style="left:79px;top:116px;width:75px;height:16px;overflow:hidden"><div class="t" style="left:0;top:0">10.196.160.0</div></div><div class="a" style="left:44px;top:136px;width:9px;height:9px;border:1px solid #8f8f8f;border-radius:2px;background:linear-gradient(#ffffff 45%,#e6e6e6)"></div><div class="a" style="left:46px;top:140px;width:5px;height:1px;background:#2d4f94;"></div><div class="a" style="left:48px;top:138px;width:1px;height:5px;background:#2d4f94;"></div><div class="a" style="left:55px;top:140px;width:1px;height:1px;background:#8c8c8c;"></div><div class="a" style="left:57px;top:140px;width:1px;height:1px;background:#8c8c8c;"></div><div class="a" style="left:59px;top:140px;width:1px;height:1px;background:#8c8c8c;"></div><div class="a" style="left:63px;top:137px;width:7px;height:7px;background:#0000d4;"></div><div class="a" style="left:79px;top:132px;width:75px;height:16px;overflow:hidden"><div class="t" style="left:0;top:0">10.196.171.144</div></div><div class="a" style="left:44px;top:152px;width:9px;height:9px;border:1px solid #8f8f8f;border-radius:2px;background:linear-gradient(#ffffff 45%,#e6e6e6)"></div><div class="a" style="left:46px;top:156px;width:5px;height:1px;background:#2d4f94;"></div><div class="a" style="left:48px;top:154px;width:1px;height:5px;background:#2d4f94;"></div><div class="a" style="left:55px;top:156px;width:1px;height:1px;background:#8c8c8c;"></div><div class="a" style="left:57px;top:156px;width:1px;height:1px;background:#8c8c8c;"></div><div class="a" style="left:59px;top:156px;width:1px;height:1px;background:#8c8c8c;"></div><div class="a" style="left:63px;top:153px;width:7px;height:7px;background:#0000d4;"></div><div class="a" style="left:79px;top:148px;width:75px;height:16px;overflow:hidden"><div class="t" style="left:0;top:0">10.196.171.168</div></div><div class="a" style="left:44px;top:168px;width:9px;height:9px;border:1px solid #8f8f8f;border-radius:2px;background:linear-gradient(#ffffff 45%,#e6e6e6)"></div><div class="a" style="left:46px;top:172px;width:5px;height:1px;background:#2d4f94;"></div><div class="a" style="left:48px;top:170px;width:1px;height:5px;background:#2d4f94;"></div><div class="a" style="left:55px;top:172px;width:1px;height:1px;background:#8c8c8c;"></div><div class="a" style="left:57px;top:172px;width:1px;height:1px;background:#8c8c8c;"></div><div class="a" style="left:59px;top:172px;width:1px;height:1px;background:#8c8c8c;"></div><div class="a" style="left:63px;top:169px;width:7px;height:7px;background:#0000d4;"></div><div class="a" style="left:79px;top:164px;width:75px;height:16px;overflow:hidden"><div class="t" style="left:0;top:0">10.196.179.0</div></div><div class="a" style="left:44px;top:184px;width:9px;height:9px;border:1px solid #8f8f8f;border-radius:2px;background:linear-gradient(#ffffff 45%,#e6e6e6)"></div><div class="a" style="left:46px;top:188px;width:5px;height:1px;background:#2d4f94;"></div><div class="a" style="left:48px;top:186px;width:1px;height:5px;background:#2d4f94;"></div><div class="a" style="left:55px;top:188px;width:1px;height:1px;background:#8c8c8c;"></div><div class="a" style="left:57px;top:188px;width:1px;height:1px;background:#8c8c8c;"></div><div class="a" style="left:59px;top:188px;width:1px;height:1px;background:#8c8c8c;"></div><div class="a" style="left:63px;top:185px;width:7px;height:7px;background:#0000d4;"></div><div class="a" style="left:79px;top:180px;width:75px;height:16px;overflow:hidden"><div class="t" style="left:0;top:0">192.168.0.176</div></div><div class="a" style="left:59px;top:116px;width:85px;height:16px;border:1px solid #3399ff"></div><div class="a" style="left:25px;top:200px;width:9px;height:9px;border:1px solid #8f8f8f;border-radius:2px;background:linear-gradient(#ffffff 45%,#e6e6e6)"></div><div class="a" style="left:27px;top:204px;width:5px;height:1px;background:#2d4f94;"></div><div class="a" style="left:29px;top:202px;width:1px;height:5px;background:#2d4f94;"></div><div class="a" style="left:35px;top:204px;width:1px;height:1px;background:#8c8c8c;"></div><div class="a" style="left:37px;top:204px;width:1px;height:1px;background:#8c8c8c;"></div><div class="a" style="left:39px;top:204px;width:1px;height:1px;background:#8c8c8c;"></div><svg class="a" style="left:42px;top:199px" width="12" height="11"><rect x="4" y="0" width="4" height="3" fill="#0000d4"/><rect x="0" y="8" width="4" height="3" fill="#0000d4"/><rect x="8" y="8" width="4" height="3" fill="#0000d4"/><path d="M5 3h2v1H5zM4 4h1v2H4zM3 6h1v1H3zM1 7h2v1H1zM7 4h1v2H7zM8 6h1v1H8zM9 7h2v1H9z" fill="#000"/></svg><div class="t" style="left:58px;top:196px;transform:scaleX(0.977);transform-origin:0 0">IPRoute</div><div class="a" style="left:25px;top:216px;width:9px;height:9px;border:1px solid #8f8f8f;border-radius:2px;background:linear-gradient(#ffffff 45%,#e6e6e6)"></div><div class="a" style="left:27px;top:220px;width:5px;height:1px;background:#2d4f94;"></div><div class="a" style="left:29px;top:218px;width:1px;height:5px;background:#2d4f94;"></div><div class="a" style="left:35px;top:220px;width:1px;height:1px;background:#8c8c8c;"></div><div class="a" style="left:37px;top:220px;width:1px;height:1px;background:#8c8c8c;"></div><div class="a" style="left:39px;top:220px;width:1px;height:1px;background:#8c8c8c;"></div><svg class="a" style="left:42px;top:215px" width="12" height="11"><rect x="4" y="0" width="4" height="3" fill="#0000d4"/><rect x="0" y="8" width="4" height="3" fill="#0000d4"/><rect x="8" y="8" width="4" height="3" fill="#0000d4"/><path d="M5 3h2v1H5zM4 4h1v2H4zM3 6h1v1H3zM1 7h2v1H1zM7 4h1v2H7zM8 6h1v1H8zM9 7h2v1H9z" fill="#000"/></svg><div class="t" style="left:58px;top:212px;transform:scaleX(0.93);transform-origin:0 0">LoadBalancer</div><div class="a" style="left:25px;top:232px;width:9px;height:9px;border:1px solid #8f8f8f;border-radius:2px;background:linear-gradient(#ffffff 45%,#e6e6e6)"></div><div class="a" style="left:27px;top:236px;width:5px;height:1px;background:#2d4f94;"></div><div class="a" style="left:29px;top:234px;width:1px;height:5px;background:#2d4f94;"></div><div class="a" style="left:35px;top:236px;width:1px;height:1px;background:#8c8c8c;"></div><div class="a" style="left:37px;top:236px;width:1px;height:1px;background:#8c8c8c;"></div><div class="a" style="left:39px;top:236px;width:1px;height:1px;background:#8c8c8c;"></div><svg class="a" style="left:42px;top:231px" width="12" height="11"><rect x="4" y="0" width="4" height="3" fill="#0000d4"/><rect x="0" y="8" width="4" height="3" fill="#0000d4"/><rect x="8" y="8" width="4" height="3" fill="#0000d4"/><path d="M5 3h2v1H5zM4 4h1v2H4zM3 6h1v1H3zM1 7h2v1H1zM7 4h1v2H7zM8 6h1v1H8zM9 7h2v1H9z" fill="#000"/></svg><div class="t" style="left:58px;top:228px;transform:scaleX(0.966);transform-origin:0 0">LogicalAdapter</div><div class="a" style="left:25px;top:248px;width:9px;height:9px;border:1px solid #8f8f8f;border-radius:2px;background:linear-gradient(#ffffff 45%,#e6e6e6)"></div><div class="a" style="left:27px;top:252px;width:5px;height:1px;background:#2d4f94;"></div><div class="a" style="left:29px;top:250px;width:1px;height:5px;background:#2d4f94;"></div><div class="a" style="left:35px;top:252px;width:1px;height:1px;background:#8c8c8c;"></div><div class="a" style="left:37px;top:252px;width:1px;height:1px;background:#8c8c8c;"></div><div class="a" style="left:39px;top:252px;width:1px;height:1px;background:#8c8c8c;"></div><svg class="a" style="left:42px;top:247px" width="12" height="11"><rect x="4" y="0" width="4" height="3" fill="#0000d4"/><rect x="0" y="8" width="4" height="3" fill="#0000d4"/><rect x="8" y="8" width="4" height="3" fill="#0000d4"/><path d="M5 3h2v1H5zM4 4h1v2H4zM3 6h1v1H3zM1 7h2v1H1zM7 4h1v2H7zM8 6h1v1H8zM9 7h2v1H9z" fill="#000"/></svg><div class="t" style="left:58px;top:244px;transform:scaleX(0.9);transform-origin:0 0">MAC</div><div class="a" style="left:25px;top:264px;width:9px;height:9px;border:1px solid #8f8f8f;border-radius:2px;background:linear-gradient(#ffffff 45%,#e6e6e6)"></div><div class="a" style="left:27px;top:268px;width:5px;height:1px;background:#2d4f94;"></div><div class="a" style="left:29px;top:266px;width:1px;height:5px;background:#2d4f94;"></div><div class="a" style="left:35px;top:268px;width:1px;height:1px;background:#8c8c8c;"></div><div class="a" style="left:37px;top:268px;width:1px;height:1px;background:#8c8c8c;"></div><div class="a" style="left:39px;top:268px;width:1px;height:1px;background:#8c8c8c;"></div><svg class="a" style="left:42px;top:263px" width="12" height="11"><rect x="4" y="0" width="4" height="3" fill="#0000d4"/><rect x="0" y="8" width="4" height="3" fill="#0000d4"/><rect x="8" y="8" width="4" height="3" fill="#0000d4"/><path d="M5 3h2v1H5zM4 4h1v2H4zM3 6h1v1H3zM1 7h2v1H1zM7 4h1v2H7zM8 6h1v1H8zM9 7h2v1H9z" fill="#000"/></svg><div class="t" style="left:58px;top:260px;transform:scaleX(0.95);transform-origin:0 0">Memory</div><div class="a" style="left:25px;top:280px;width:9px;height:9px;border:1px solid #8f8f8f;border-radius:2px;background:linear-gradient(#ffffff 45%,#e6e6e6)"></div><div class="a" style="left:27px;top:284px;width:5px;height:1px;background:#2d4f94;"></div><div class="a" style="left:29px;top:282px;width:1px;height:5px;background:#2d4f94;"></div><div class="a" style="left:35px;top:284px;width:1px;height:1px;background:#8c8c8c;"></div><div class="a" style="left:37px;top:284px;width:1px;height:1px;background:#8c8c8c;"></div><div class="a" style="left:39px;top:284px;width:1px;height:1px;background:#8c8c8c;"></div><svg class="a" style="left:42px;top:279px" width="12" height="11"><rect x="4" y="0" width="4" height="3" fill="#0000d4"/><rect x="0" y="8" width="4" height="3" fill="#0000d4"/><rect x="8" y="8" width="4" height="3" fill="#0000d4"/><path d="M5 3h2v1H5zM4 4h1v2H4zM3 6h1v1H3zM1 7h2v1H1zM7 4h1v2H7zM8 6h1v1H8zM9 7h2v1H9z" fill="#000"/></svg><div class="t" style="left:58px;top:276px;transform:scaleX(0.94);transform-origin:0 0">NasManager</div><div class="a" style="left:25px;top:296px;width:9px;height:9px;border:1px solid #8f8f8f;border-radius:2px;background:linear-gradient(#ffffff 45%,#e6e6e6)"></div><div class="a" style="left:27px;top:300px;width:5px;height:1px;background:#2d4f94;"></div><div class="a" style="left:29px;top:298px;width:1px;height:5px;background:#2d4f94;"></div><div class="a" style="left:35px;top:300px;width:1px;height:1px;background:#8c8c8c;"></div><div class="a" style="left:37px;top:300px;width:1px;height:1px;background:#8c8c8c;"></div><div class="a" style="left:39px;top:300px;width:1px;height:1px;background:#8c8c8c;"></div><svg class="a" style="left:42px;top:295px" width="12" height="11"><rect x="4" y="0" width="4" height="3" fill="#0000d4"/><rect x="0" y="8" width="4" height="3" fill="#0000d4"/><rect x="8" y="8" width="4" height="3" fill="#0000d4"/><path d="M5 3h2v1H5zM4 4h1v2H4zM3 6h1v1H3zM1 7h2v1H1zM7 4h1v2H7zM8 6h1v1H8zM9 7h2v1H9z" fill="#000"/></svg><div class="t" style="left:58px;top:292px;transform:scaleX(1.0);transform-origin:0 0">Port</div><div class="a" style="left:25px;top:312px;width:9px;height:9px;border:1px solid #8f8f8f;border-radius:2px;background:linear-gradient(#ffffff 45%,#e6e6e6)"></div><div class="a" style="left:27px;top:316px;width:5px;height:1px;background:#2d4f94;"></div><div class="a" style="left:29px;top:314px;width:1px;height:5px;background:#2d4f94;"></div><div class="a" style="left:35px;top:316px;width:1px;height:1px;background:#8c8c8c;"></div><div class="a" style="left:37px;top:316px;width:1px;height:1px;background:#8c8c8c;"></div><div class="a" style="left:39px;top:316px;width:1px;height:1px;background:#8c8c8c;"></div><svg class="a" style="left:42px;top:311px" width="12" height="11"><rect x="4" y="0" width="4" height="3" fill="#0000d4"/><rect x="0" y="8" width="4" height="3" fill="#0000d4"/><rect x="8" y="8" width="4" height="3" fill="#0000d4"/><path d="M5 3h2v1H5zM4 4h1v2H4zM3 6h1v1H3zM1 7h2v1H1zM7 4h1v2H7zM8 6h1v1H8zM9 7h2v1H9z" fill="#000"/></svg><div class="t" style="left:58px;top:308px;transform:scaleX(0.95);transform-origin:0 0">PowerSupply</div></div><div class="a" style="left:198px;top:62px;width:918px;height:1px;background:#a0a0a0;"></div><div class="a" style="left:199px;top:63px;width:917px;height:1px;background:#ffffff;"></div><div class="a" style="left:198px;top:62px;width:1px;height:342px;background:#a0a0a0;"></div><div class="a" style="left:199px;top:63px;width:1px;height:341px;background:#ffffff;"></div><div class="t" style="left:568px;top:55px;padding:0 1px 0 2px;background:#f0f0f0;letter-spacing:0.2px">Instance "IPNetwork::10.196.160.0"</div><div class="a" style="left:202px;top:93px;width:914px;height:1px;background:#898c95;"></div><div class="a" style="left:202px;top:93px;width:1px;height:311px;background:#898c95;"></div><div class="a" style="left:203px;top:94px;width:913px;height:310px;background:#fdfdfd;"></div><div class="a" style="left:263px;top:75px;width:43px;height:18px;border:1px solid #898c95;border-bottom:none;background:linear-gradient(#f3f3f3,#ebebeb 50%,#dedede 51%,#d4d4d4)"></div><div class="a" style="left:264px;top:76px;width:1px;height:17px;background:#fafafa;"></div><div class="a" style="left:263px;top:93px;width:853px;height:1px;background:#898c95;"></div><div class="t" style="left:268.5px;top:78px;transform:scaleX(0.954);transform-origin:0 0">Groups</div><div class="a" style="left:202px;top:73px;width:62px;height:21px;border:1px solid #898c95;border-bottom:none;background:#fdfdfd"></div><div class="t" style="left:209px;top:75px;transform:scaleX(1.05);transform-origin:0 0">Attributes</div><div class="a" style="left:204px;top:97px;width:912px;height:1px;background:#828790;"></div><div class="a" style="left:204px;top:97px;width:1px;height:307px;background:#828790;"></div><div class="a" style="left:1115px;top:97px;width:1px;height:307px;background:#828790;"></div><div class="a" style="left:205px;top:98px;width:910px;height:18px;background:#f0f0f0;"></div><div class="a" style="left:205px;top:98px;width:150px;height:1px;background:#ffffff;"></div><div class="a" style="left:205px;top:98px;width:1px;height:17px;background:#ffffff;"></div><div class="a" style="left:205px;top:114px;width:149px;height:1px;background:#c8c8c8;"></div><div class="a" style="left:205px;top:115px;width:150px;height:1px;background:#808080;"></div><div class="a" style="left:353px;top:99px;width:1px;height:16px;background:#c8c8c8;"></div><div class="a" style="left:354px;top:98px;width:1px;height:18px;background:#808080;"></div><div class="a" style="left:355px;top:98px;width:70px;height:1px;background:#ffffff;"></div><div class="a" style="left:355px;top:98px;width:1px;height:17px;background:#ffffff;"></div><div class="a" style="left:355px;top:114px;width:69px;height:1px;background:#c8c8c8;"></div><div class="a" style="left:355px;top:115px;width:70px;height:1px;background:#808080;"></div><div class="a" style="left:423px;top:99px;width:1px;height:16px;background:#c8c8c8;"></div><div class="a" style="left:424px;top:98px;width:1px;height:18px;background:#808080;"></div><div class="a" style="left:425px;top:98px;width:140px;height:1px;background:#ffffff;"></div><div class="a" style="left:425px;top:98px;width:1px;height:17px;background:#ffffff;"></div><div class="a" style="left:425px;top:114px;width:139px;height:1px;background:#c8c8c8;"></div><div class="a" style="left:425px;top:115px;width:140px;height:1px;background:#808080;"></div><div class="a" style="left:563px;top:99px;width:1px;height:16px;background:#c8c8c8;"></div><div class="a" style="left:564px;top:98px;width:1px;height:18px;background:#808080;"></div><div class="a" style="left:565px;top:98px;width:560px;height:1px;background:#ffffff;"></div><div class="a" style="left:565px;top:98px;width:1px;height:17px;background:#ffffff;"></div><div class="a" style="left:565px;top:114px;width:559px;height:1px;background:#c8c8c8;"></div><div class="a" style="left:565px;top:115px;width:560px;height:1px;background:#808080;"></div><div class="a" style="left:1114px;top:98px;width:1px;height:17px;background:#ffffff;"></div><div class="t" style="left:258px;top:99px;transform:scaleX(0.98);transform-origin:0 0">Name</div><div class="a" style="left:290px;top:102px;width:12px;height:11px;background:#c0c0c0;"></div><div class="a" style="left:295px;top:104px;width:1px;height:1px;background:#6e6e6e;"></div><div class="a" style="left:295px;top:105px;width:1px;height:1px;background:#6e6e6e;"></div><div class="a" style="left:294px;top:106px;width:1px;height:1px;background:#6e6e6e;"></div><div class="a" style="left:294px;top:107px;width:1px;height:1px;background:#6e6e6e;"></div><div class="a" style="left:293px;top:108px;width:1px;height:1px;background:#6e6e6e;"></div><div class="a" style="left:293px;top:109px;width:1px;height:1px;background:#6e6e6e;"></div><div class="a" style="left:292px;top:110px;width:1px;height:1px;background:#6e6e6e;"></div><div class="a" style="left:296px;top:104px;width:1px;height:1px;background:#ffffff;"></div><div class="a" style="left:296px;top:105px;width:1px;height:1px;background:#ffffff;"></div><div class="a" style="left:297px;top:106px;width:1px;height:1px;background:#ffffff;"></div><div class="a" style="left:297px;top:107px;width:1px;height:1px;background:#ffffff;"></div><div class="a" style="left:298px;top:108px;width:1px;height:1px;background:#ffffff;"></div><div class="a" style="left:298px;top:109px;width:1px;height:1px;background:#ffffff;"></div><div class="a" style="left:293px;top:110px;width:7px;height:1px;background:#ffffff;"></div><div class="t" style="left:378px;top:99px;">Type</div><div class="t" style="left:482px;top:99px;transform:scaleX(0.92);transform-origin:0 0">Value</div><div class="t" style="left:567px;top:99px;transform:scaleX(0.958);transform-origin:0 0">Description</div><div class="a" style="left:205px;top:116px;width:910px;height:288px;overflow:hidden;background:#fff"><div class="a" style="left:0px;top:-1px;width:149px;height:16px;overflow:hidden"><div class="t" style="left:0px;top:0;transform:scaleX(0.958);transform-origin:0 0;">CIM_CreationClassName</div></div><div class="a" style="left:150px;top:-1px;width:69px;height:16px;overflow:hidden"><div class="t" style="left:0px;top:0;">string</div></div><div class="a" style="left:220px;top:-1px;width:139px;height:16px;overflow:hidden"><div class="t" style="left:0px;top:0;">IPNetwork</div></div><div class="a" style="left:360px;top:-1px;width:559px;height:16px;overflow:hidden"><div class="t" style="left:0px;top:0;transform:scaleX(0.981);transform-origin:0 0;">CreationClassName attribute defined in CIM model.</div></div><div class="a" style="left:0px;top:15px;width:910px;height:1px;background:#c0c0c0;"></div><div class="a" style="left:0px;top:15px;width:149px;height:16px;overflow:hidden"><div class="t" style="left:0px;top:0;transform:scaleX(0.972);transform-origin:0 0;">CIM_Description</div></div><div class="a" style="left:150px;top:15px;width:69px;height:16px;overflow:hidden"><div class="t" style="left:0px;top:0;">string</div></div><div class="a" style="left:220px;top:15px;width:139px;height:16px;overflow:hidden"><div class="t" style="left:0px;top:0;"></div></div><div class="a" style="left:360px;top:15px;width:559px;height:16px;overflow:hidden"><div class="t" style="left:0px;top:0;transform:scaleX(1.007);transform-origin:0 0;">The Description property provides a textual description of the object.</div></div><div class="a" style="left:0px;top:31px;width:910px;height:1px;background:#c0c0c0;"></div><div class="a" style="left:0px;top:31px;width:149px;height:16px;overflow:hidden"><div class="t" style="left:0px;top:0;transform:scaleX(0.964);transform-origin:0 0;">CIM_Name</div></div><div class="a" style="left:150px;top:31px;width:69px;height:16px;overflow:hidden"><div class="t" style="left:0px;top:0;">string</div></div><div class="a" style="left:220px;top:31px;width:139px;height:16px;overflow:hidden"><div class="t" style="left:0px;top:0;">IPNET-10.196.160.0</div></div><div class="a" style="left:360px;top:31px;width:559px;height:16px;overflow:hidden"><div class="t" style="left:0px;top:0;transform:scaleX(0.985);transform-origin:0 0;">Name attribute defined in CIM model. It defines the label by which the object is known. When subclassed, the Name property can be overridden to be a Key property.</div></div><div class="a" style="left:0px;top:47px;width:910px;height:1px;background:#c0c0c0;"></div><div class="a" style="left:0px;top:47px;width:149px;height:16px;overflow:hidden"><div class="t" style="left:0px;top:0;transform:scaleX(0.997);transform-origin:0 0;">ConnectedSystemsUnrespo...</div></div><div class="a" style="left:150px;top:47px;width:69px;height:16px;overflow:hidden"><div class="t" style="left:0px;top:0;">boolean</div></div><div class="a" style="left:220px;top:47px;width:139px;height:16px;overflow:hidden"><div class="t" style="left:0px;top:0;">false</div></div><div class="a" style="left:360px;top:47px;width:559px;height:16px;overflow:hidden"><div class="t" style="left:0px;top:0;transform:scaleX(0.995);transform-origin:0 0;">no description available</div></div><div class="a" style="left:0px;top:63px;width:910px;height:1px;background:#c0c0c0;"></div><div class="a" style="left:0px;top:63px;width:149px;height:16px;overflow:hidden"><div class="t" style="left:0px;top:0;transform:scaleX(0.955);transform-origin:0 0;">CreationClassName</div></div><div class="a" style="left:150px;top:63px;width:69px;height:16px;overflow:hidden"><div class="t" style="left:0px;top:0;">string</div></div><div class="a" style="left:220px;top:63px;width:139px;height:16px;overflow:hidden"><div class="t" style="left:0px;top:0;">IPNetwork</div></div><div class="a" style="left:360px;top:63px;width:559px;height:16px;overflow:hidden"><div class="t" style="left:0px;top:0;transform:scaleX(0.993);transform-origin:0 0;">The name of the most-derived class of this instance.</div></div><div class="a" style="left:0px;top:79px;width:910px;height:1px;background:#c0c0c0;"></div><div class="a" style="left:0px;top:79px;width:149px;height:16px;overflow:hidden"><div class="t" style="left:0px;top:0;transform:scaleX(0.979);transform-origin:0 0;">Description</div></div><div class="a" style="left:150px;top:79px;width:69px;height:16px;overflow:hidden"><div class="t" style="left:0px;top:0;">string</div></div><div class="a" style="left:220px;top:79px;width:139px;height:16px;overflow:hidden"><div class="t" style="left:0px;top:0;"></div></div><div class="a" style="left:360px;top:79px;width:559px;height:16px;overflow:hidden"><div class="t" style="left:0px;top:0;transform:scaleX(1.03);transform-origin:0 0;">A textual description of the object.</div></div><div class="a" style="left:0px;top:95px;width:910px;height:1px;background:#c0c0c0;"></div><div class="a" style="left:0px;top:95px;width:149px;height:16px;overflow:hidden"><div class="t" style="left:0px;top:0;transform:scaleX(0.946);transform-origin:0 0;">DisplayClassName</div></div><div class="a" style="left:150px;top:95px;width:69px;height:16px;overflow:hidden"><div class="t" style="left:0px;top:0;">string</div></div><div class="a" style="left:220px;top:95px;width:139px;height:16px;overflow:hidden"><div class="t" style="left:0px;top:0;">IPNetwork</div></div><div class="a" style="left:360px;top:95px;width:559px;height:16px;overflow:hidden"><div class="t" style="left:0px;top:0;transform:scaleX(0.979);transform-origin:0 0;">The string shown in the GUI when this object's class is displayed.</div></div><div class="a" style="left:0px;top:111px;width:910px;height:1px;background:#c0c0c0;"></div><div class="a" style="left:0px;top:111px;width:149px;height:16px;overflow:hidden"><div class="t" style="left:0px;top:0;transform:scaleX(0.953);transform-origin:0 0;">DisplayName</div></div><div class="a" style="left:150px;top:111px;width:69px;height:16px;overflow:hidden"><div class="t" style="left:0px;top:0;">string</div></div><div class="a" style="left:220px;top:111px;width:139px;height:16px;overflow:hidden"><div class="t" style="left:0px;top:0;">10.196.160.0</div></div><div class="a" style="left:360px;top:111px;width:559px;height:16px;overflow:hidden"><div class="t" style="left:0px;top:0;transform:scaleX(0.982);transform-origin:0 0;">The string shown in the GUI when this object's name is displayed.</div></div><div class="a" style="left:0px;top:127px;width:910px;height:1px;background:#c0c0c0;"></div><div class="a" style="left:0px;top:127px;width:149px;height:16px;overflow:hidden"><div class="t" style="left:0px;top:0;transform:scaleX(0.998);transform-origin:0 0;">IsManaged</div></div><div class="a" style="left:150px;top:127px;width:69px;height:16px;overflow:hidden"><div class="t" style="left:0px;top:0;">boolean</div></div><div class="a" style="left:220px;top:127px;width:139px;height:16px;overflow:hidden"><div class="t" style="left:0px;top:0;">true</div></div><div class="a" style="left:360px;top:127px;width:559px;height:16px;overflow:hidden"><div class="t" style="left:0px;top:0;transform:scaleX(0.9795);transform-origin:0 0;">The IsManaged attribute determines if an ICIM_ManagedSystemElement should be monitored by the management system.</div></div><div class="a" style="left:0px;top:143px;width:910px;height:1px;background:#c0c0c0;"></div><div class="a" style="left:0px;top:143px;width:149px;height:16px;overflow:hidden"><div class="t" style="left:0px;top:0;">IsShadow</div></div><div class="a" style="left:150px;top:143px;width:69px;height:16px;overflow:hidden"><div class="t" style="left:0px;top:0;">boolean</div></div><div class="a" style="left:220px;top:143px;width:139px;height:16px;overflow:hidden"><div class="t" style="left:0px;top:0;">false</div></div><div class="a" style="left:360px;top:143px;width:559px;height:16px;overflow:hidden"><div class="t" style="left:0px;top:0;transform:scaleX(0.985);transform-origin:0 0;">TRUE if this is a dummy IP object created to support backwards compatibilitywith the satellite servers of AM [When shadow]</div></div><div class="a" style="left:0px;top:159px;width:910px;height:1px;background:#c0c0c0;"></div><div class="a" style="left:0px;top:159px;width:149px;height:16px;overflow:hidden"><div class="t" style="left:0px;top:0;transform:scaleX(0.865);transform-origin:0 0;">KEYS</div></div><div class="a" style="left:150px;top:159px;width:69px;height:16px;overflow:hidden"><div class="t" style="left:0px;top:0;">string</div></div><div class="a" style="left:220px;top:159px;width:139px;height:16px;overflow:hidden"><div class="t" style="left:0px;top:0;">string:SystemCreationCla...</div></div><div class="a" style="left:360px;top:159px;width:559px;height:16px;overflow:hidden"><div class="t" style="left:0px;top:0;transform:scaleX(0.991);transform-origin:0 0;">Types and Names of key attributes defined in CIM model.</div></div><div class="a" style="left:0px;top:175px;width:910px;height:1px;background:#c0c0c0;"></div><div class="a" style="left:0px;top:176px;width:910px;height:15px;background:#3399ff;"></div><div class="a" style="left:0px;top:175px;width:149px;height:16px;overflow:hidden"><div class="t" style="left:0px;top:0;color:#fff;transform:scaleX(0.983);transform-origin:0 0;">MaximumNetworkSizeForCo...</div></div><div class="a" style="left:150px;top:175px;width:69px;height:16px;overflow:hidden"><div class="t" style="left:0px;top:0;color:#fff;">int</div></div><div class="a" style="left:220px;top:175px;width:139px;height:16px;overflow:hidden"><div class="t" style="left:0px;top:0;color:#fff;">10</div></div><div class="a" style="left:360px;top:175px;width:559px;height:16px;overflow:hidden"><div class="t" style="left:0px;top:0;color:#fff;transform:scaleX(0.985);transform-origin:0 0;">The maximum number of systems that participate in this IPNetwork before we stop exchanging MightBeDown symptoms</div></div><div class="a" style="left:0px;top:191px;width:910px;height:1px;background:#c0c0c0;"></div><div class="a" style="left:0px;top:191px;width:149px;height:16px;overflow:hidden"><div class="t" style="left:0px;top:0;transform:scaleX(0.967);transform-origin:0 0;">Name</div></div><div class="a" style="left:150px;top:191px;width:69px;height:16px;overflow:hidden"><div class="t" style="left:0px;top:0;">string</div></div><div class="a" style="left:220px;top:191px;width:139px;height:16px;overflow:hidden"><div class="t" style="left:0px;top:0;">IPNET-10.196.160.0</div></div><div class="a" style="left:360px;top:191px;width:559px;height:16px;overflow:hidden"><div class="t" style="left:0px;top:0;transform:scaleX(1.018);transform-origin:0 0;">Name of object</div></div><div class="a" style="left:0px;top:207px;width:910px;height:1px;background:#c0c0c0;"></div><div class="a" style="left:0px;top:207px;width:149px;height:16px;overflow:hidden"><div class="t" style="left:0px;top:0;transform:scaleX(0.99);transform-origin:0 0;">Netmask</div></div><div class="a" style="left:150px;top:207px;width:69px;height:16px;overflow:hidden"><div class="t" style="left:0px;top:0;">string</div></div><div class="a" style="left:220px;top:207px;width:139px;height:16px;overflow:hidden"><div class="t" style="left:0px;top:0;">255.255.255.248</div></div><div class="a" style="left:360px;top:207px;width:559px;height:16px;overflow:hidden"><div class="t" style="left:0px;top:0;transform:scaleX(0.994);transform-origin:0 0;">The IP network mask.</div></div><div class="a" style="left:0px;top:223px;width:910px;height:1px;background:#c0c0c0;"></div><div class="a" style="left:0px;top:223px;width:149px;height:16px;overflow:hidden"><div class="t" style="left:0px;top:0;transform:scaleX(0.982);transform-origin:0 0;">NetworkNumber</div></div><div class="a" style="left:150px;top:223px;width:69px;height:16px;overflow:hidden"><div class="t" style="left:0px;top:0;">string</div></div><div class="a" style="left:220px;top:223px;width:139px;height:16px;overflow:hidden"><div class="t" style="left:0px;top:0;">10.196.160.0</div></div><div class="a" style="left:360px;top:223px;width:559px;height:16px;overflow:hidden"><div class="t" style="left:0px;top:0;transform:scaleX(1.008);transform-origin:0 0;">The IP network number.</div></div><div class="a" style="left:0px;top:239px;width:910px;height:1px;background:#c0c0c0;"></div><div class="a" style="left:0px;top:239px;width:149px;height:16px;overflow:hidden"><div class="t" style="left:0px;top:0;transform:scaleX(0.953);transform-origin:0 0;">ServiceName</div></div><div class="a" style="left:150px;top:239px;width:69px;height:16px;overflow:hidden"><div class="t" style="left:0px;top:0;">string</div></div><div class="a" style="left:220px;top:239px;width:139px;height:16px;overflow:hidden"><div class="t" style="left:0px;top:0;"></div></div><div class="a" style="left:360px;top:239px;width:559px;height:16px;overflow:hidden"><div class="t" style="left:0px;top:0;transform:scaleX(1.005);transform-origin:0 0;">Name of external server used for imported events and instrumented attributes.</div></div><div class="a" style="left:0px;top:255px;width:910px;height:1px;background:#c0c0c0;"></div><div class="a" style="left:0px;top:255px;width:149px;height:16px;overflow:hidden"><div class="t" style="left:0px;top:0;color:#808080;font-style:italic;left:1.5px;top:1px;font-size:12px;transform:scaleX(1.045);transform-origin:0 0;">SystemName</div></div><div class="a" style="left:150px;top:255px;width:69px;height:16px;overflow:hidden"><div class="t" style="left:0px;top:0;color:#808080;font-style:italic;left:1.5px;top:1px;font-size:12px;transform:scaleX(1.045);transform-origin:0 0;">string</div></div><div class="a" style="left:220px;top:255px;width:139px;height:16px;overflow:hidden"><div class="t" style="left:0px;top:0;color:#808080;font-style:italic;font-style:normal;letter-spacing:0.4px;">--------</div></div><div class="a" style="left:360px;top:255px;width:559px;height:16px;overflow:hidden"><div class="t" style="left:0px;top:0;color:#808080;font-style:italic;left:1.5px;top:1px;font-size:12px;transform:scaleX(1.045);transform-origin:0 0;">The scoping AdminDomain's Name.</div></div><div class="a" style="left:0px;top:271px;width:910px;height:1px;background:#c0c0c0;"></div><div class="a" style="left:0px;top:271px;width:149px;height:16px;overflow:hidden"><div class="t" style="left:0px;top:0;transform:scaleX(1.129);transform-origin:0 0;">Tag</div></div><div class="a" style="left:150px;top:271px;width:69px;height:16px;overflow:hidden"><div class="t" style="left:0px;top:0;">string</div></div><div class="a" style="left:220px;top:271px;width:139px;height:16px;overflow:hidden"><div class="t" style="left:0px;top:0;"></div></div><div class="a" style="left:360px;top:271px;width:559px;height:16px;overflow:hidden"><div class="t" style="left:0px;top:0;transform:scaleX(0.999);transform-origin:0 0;">The Tag configured by the user for this IPNetwork. Typically, all the IPs inone IPNetwork share the same tag</div></div><div class="a" style="left:0px;top:287px;width:910px;height:1px;background:#c0c0c0;"></div><div class="a" style="left:149px;top:-1px;width:1px;height:289px;background:#c0c0c0;"></div><div class="a" style="left:219px;top:-1px;width:1px;height:289px;background:#c0c0c0;"></div><div class="a" style="left:359px;top:-1px;width:1px;height:289px;background:#c0c0c0;"></div></div>
</body></html>
